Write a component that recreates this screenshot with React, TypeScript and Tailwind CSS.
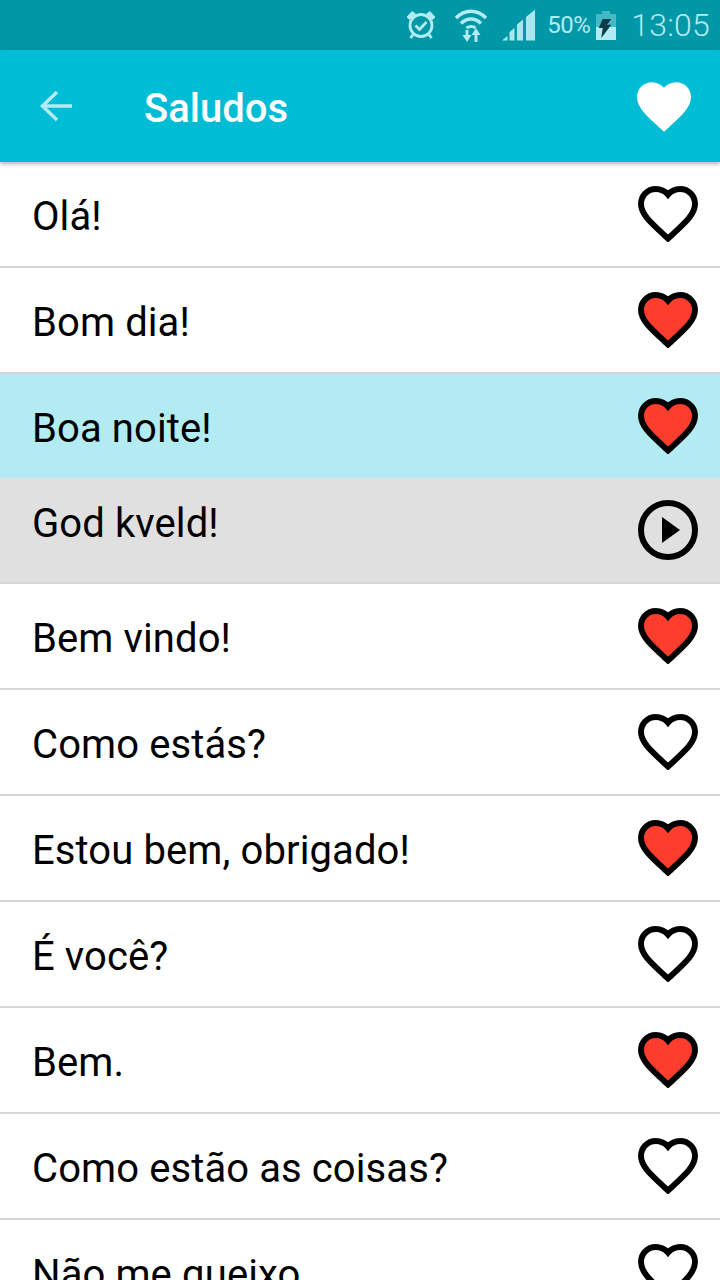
const HEART = "M12 21.35l-1.45-1.32C5.4 15.36 2 12.28 2 8.5 2 5.42 4.42 3 7.5 3c1.74 0 3.41.81 4.5 2.09C13.09 3.81 14.76 3 16.5 3 19.58 3 22 5.42 22 8.5c0 3.78-3.4 6.86-8.55 11.54L12 21.35z";

function Heart({ fill }: { fill: string }) {
  return (
    <svg width="60" height="56" viewBox="0.9 1.9 22.2 20.74" className="block">
      <path d={HEART} fill={fill} stroke="#000" strokeWidth="2.2" strokeLinejoin="miter" />
    </svg>
  );
}

function Play() {
  return (
    <svg width="60" height="60" viewBox="0 0 60 60" className="block">
      <circle cx="30" cy="30" r="27" fill="none" stroke="#000" strokeWidth="6" />
      <path d="M24 17L42 30L24 43z" fill="#000" />
    </svg>
  );
}

function Row({ text, icon, bg = "bg-white", divider = true, up = false }: { text: string; icon: "empty" | "red" | "play"; bg?: string; divider?: boolean; up?: boolean }) {
  return (
    <div className={`${bg} ${divider ? "h-[106px] border-b-2 border-[#d6d6d6]" : "h-[104px]"} flex items-center justify-between pl-[32px] pr-[22px] shrink-0`}>
      <span className={`text-[40px] leading-[48px] tracking-[0.1px] text-black ${up ? "-mt-[12px]" : "mt-[6px]"}`}>{text}</span>
      <span className={up ? "-mt-[1px]" : "mt-[0px]"}>
        {icon === "play" ? <Play /> : <Heart fill={icon === "red" ? "#ff3d2c" : "none"} />}
      </span>
    </div>
  );
}

const rows: { text: string; icon: "empty" | "red" }[] = [
  { text: "Bem vindo!", icon: "red" },
  { text: "Como estás?", icon: "empty" },
  { text: "Estou bem, obrigado!", icon: "red" },
  { text: "É você?", icon: "empty" },
  { text: "Bem.", icon: "red" },
  { text: "Como estão as coisas?", icon: "empty" },
  { text: "Não me queixo.", icon: "empty" },
];

export default function App() {
  return (
    <div className="w-[720px] h-[1280px] overflow-hidden flex flex-col bg-white font-['Roboto',sans-serif]">
      <div className="h-[50px] bg-[#0097a7] flex items-center justify-end pr-[10px] text-[#b2ebf2] shrink-0">
        <svg width="32" height="32" viewBox="0 0 32 32" className="mr-[17px]" fill="none" stroke="#b2ebf2">
          <circle cx="16" cy="16.500" r="11" strokeWidth="2.800" />
          <path d="M10.500 16.500l4 4 7-7.500" strokeWidth="2.800" />
          <path d="M2 8L7 2.500L10.500 5L4.500 10.500z M30 8L25 2.500L21.500 5L27.500 10.500z" fill="#b2ebf2" strokeWidth="1" />
          <path d="M8 25.500l-2.500 3.500M24 25.500l2.500 3.500" strokeWidth="2.800" />
        </svg>
        <svg width="34" height="34" viewBox="0 0 34 34" className="mr-[14px]" fill="none" stroke="#b2ebf2" strokeWidth="3.600">
          <path d="M2 10C11 1 23 1 32 10" />
          <path d="M7 15.500C13 9.500 21 9.500 27 15.500" />
          <path d="M12.500 20C15 18 19 18 21.500 20" strokeWidth="3" />
          <path d="M13 22v7" strokeWidth="3" />
          <path d="M8.500 27h9l-4.500 7z" fill="#b2ebf2" stroke="none" />
          <path d="M22 34v-8" strokeWidth="3" />
          <path d="M17.500 27h9l-4.500-7z" fill="#b2ebf2" stroke="none" />
        </svg>
        <svg width="34" height="32" viewBox="0 0 34 32" className="mr-[11px]" fill="#b2ebf2">
          <path d="M0 31.500l5.500-4.500v4.500z M7.500 31.500V23l5-4v12.500z M15 31.500V15.500l6-5v21z M24 31.500V8l9-7.500v31z" opacity="0.95" />
        </svg>
        <span className="text-[24px] leading-none mr-[6px] mb-[1px] tracking-[-0.5px]">50%</span>
        <svg width="20" height="29" viewBox="0 0 20 29" className="mr-[15px]">
          <path d="M6 0h8v3h6v13H0V3h6z" fill="#b2ebf2" opacity="0.4" />
          <path d="M0 16h20v13H0z" fill="#b2ebf2" />
          <path d="M15.300 8H6.700L2.700 17H6.700L5.300 27L15.300 13.700H11z" fill="#0b3c49" />
        </svg>
        <span className="text-[32px] leading-none font-light tracking-[0.2px]">13:05</span>
      </div>
      <div className="relative z-10 h-[112px] bg-[#00bcd4] flex items-center shrink-0 shadow-[0_2px_4px_rgba(0,0,0,0.3)]">
        <svg width="36" height="32" viewBox="0 0 36 32" className="ml-[39px] mr-[69px]" fill="none" stroke="#b2ebf2" strokeWidth="3.500">
          <path d="M33 16H4" />
          <path d="M18 2L3.500 16L18 30" />
        </svg>
        <span className="text-[40px] leading-[48px] font-medium text-white mt-[5px]">Saludos</span>
        <svg width="54" height="50" viewBox="2 3 20 18.350" className="ml-auto mr-[29px] mt-[1px]">
          <path d={HEART} fill="#fff" />
        </svg>
      </div>
      <div className="flex flex-col">
        <Row text="Olá!" icon="empty" />
        <Row text="Bom dia!" icon="red" />
        <Row text="Boa noite!" icon="red" bg="bg-[#b2ebf2]" divider={false} />
        <Row text="God kveld!" icon="play" bg="bg-[#e0e0e0]" up />
        {rows.map((r) => (
          <Row key={r.text} text={r.text} icon={r.icon} />
        ))}
      </div>
    </div>
  );
}
